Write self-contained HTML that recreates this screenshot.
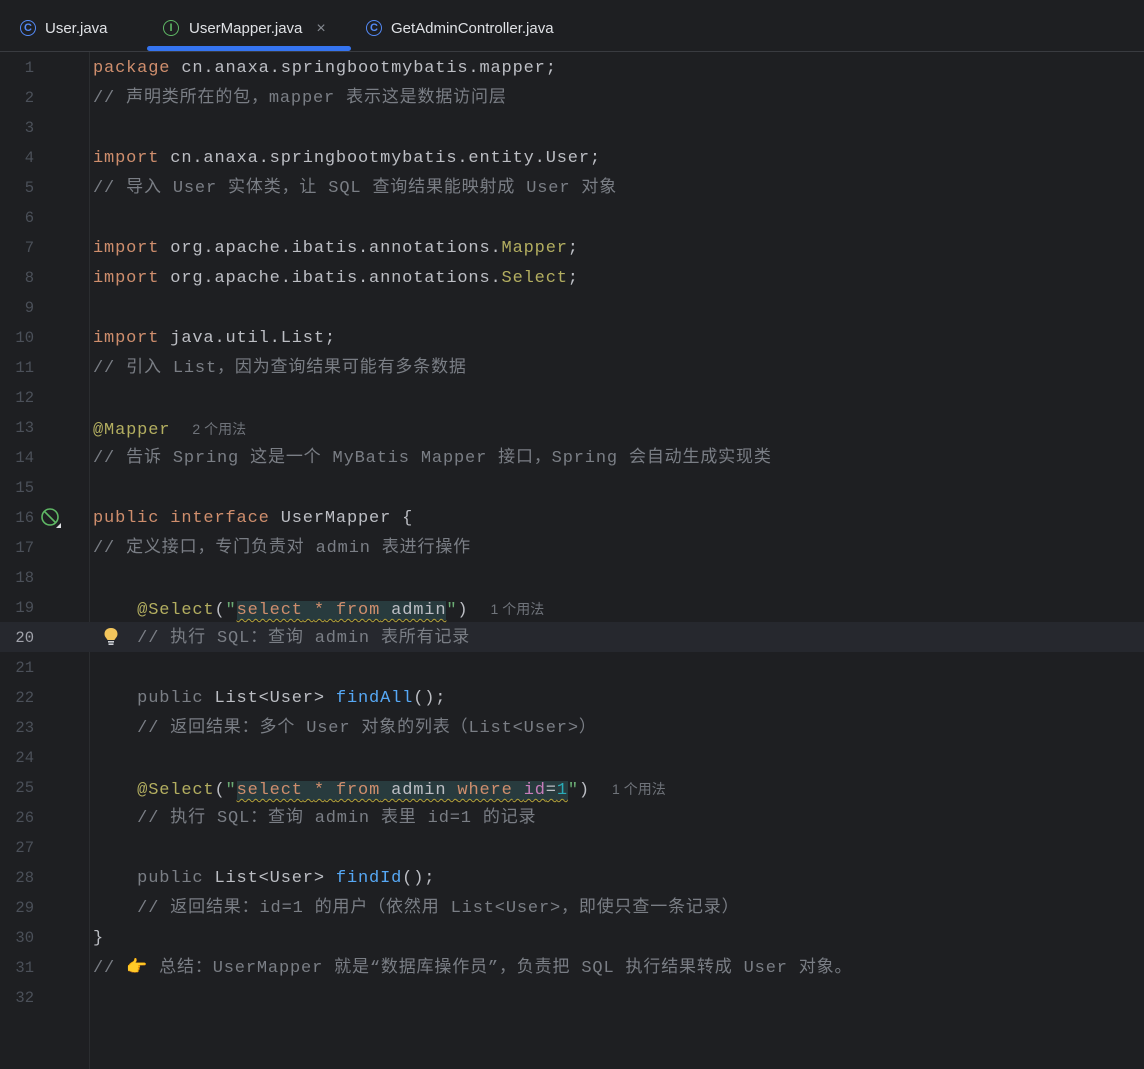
<!DOCTYPE html>
<html><head><meta charset="utf-8">
<style>
html,body{margin:0;padding:0;}
body{width:1144px;height:1069px;background:#1e1f22;position:relative;overflow:hidden;font-family:"Liberation Sans","Noto Sans CJK SC",sans-serif;}
.tabs{position:absolute;left:0;top:0;width:1144px;height:51px;background:#1e1f22;border-bottom:1px solid #393b40;}
.tab{position:absolute;top:17px;font-size:15px;color:#dfe1e5;height:24px;line-height:24px;}
.ic{position:absolute;top:3px;width:14px;height:14px;border:1.6px solid #548af7;border-radius:50%;font-size:11px;line-height:14px;text-align:center;color:#548af7;font-weight:bold;}
.ic.g{border-color:#5fb865;color:#5fb865;}
.uline{position:absolute;left:147px;top:46px;width:204px;height:5px;background:#3574f0;border-radius:3px;}
.gsep{position:absolute;left:89px;top:52px;width:1px;height:1017px;background:#2b2d30;}
.cur{position:absolute;left:0;top:622px;width:1144px;height:30px;background:#26282e;}
.ln{position:absolute;left:0;width:34px;text-align:right;font-family:"Liberation Mono",monospace;font-size:15.5px;color:#4b5059;height:30px;line-height:30px;transform:translateY(1px);}
.ln.c{color:#a1a3ab;}
.row{position:absolute;left:93px;height:30px;line-height:30px;white-space:pre;font-family:"Liberation Mono","Noto Sans CJK SC",monospace;font-size:17px;letter-spacing:0.84px;color:#bcbec4;transform:translateY(2px);}
.k{color:#cf8e6d}.cm{color:#7a7e85}.an{color:#b3ae60}.m{color:#56a8f5}.s{color:#6aab73}.pu{color:#c77dbb}.nm{color:#2aacb8}
.inj{background:#283b3e;text-decoration:underline wavy #b5a33a;text-decoration-thickness:1px;text-underline-offset:4px;}
.hint{font-family:"Liberation Sans","Noto Sans CJK SC",sans-serif;font-size:14px;color:#6f737a;letter-spacing:0;}
</style></head><body>
<div class="tabs">
 <div class="tab" style="left:20px"><span class="ic" style="left:0">C</span><span style="margin-left:25px">User.java</span></div>
 <div class="tab" style="left:163px"><span class="ic g" style="left:0">I</span><span style="margin-left:26px">UserMapper.java</span><span style="margin-left:14px;color:#868a91;font-size:16px">×</span></div>
 <div class="tab" style="left:366px"><span class="ic" style="left:0">C</span><span style="margin-left:25px">GetAdminController.java</span></div>
 <div class="uline"></div>
</div>
<div class="gsep"></div>
<div class="cur"></div>

<div class="ln" style="top:52px">1</div><div class="ln" style="top:82px">2</div><div class="ln" style="top:112px">3</div><div class="ln" style="top:142px">4</div><div class="ln" style="top:172px">5</div><div class="ln" style="top:202px">6</div><div class="ln" style="top:232px">7</div><div class="ln" style="top:262px">8</div><div class="ln" style="top:292px">9</div><div class="ln" style="top:322px">10</div><div class="ln" style="top:352px">11</div><div class="ln" style="top:382px">12</div><div class="ln" style="top:412px">13</div><div class="ln" style="top:442px">14</div><div class="ln" style="top:472px">15</div><div class="ln" style="top:502px">16</div><div class="ln" style="top:532px">17</div><div class="ln" style="top:562px">18</div><div class="ln" style="top:592px">19</div><div class="ln c" style="top:622px">20</div><div class="ln" style="top:652px">21</div><div class="ln" style="top:682px">22</div><div class="ln" style="top:712px">23</div><div class="ln" style="top:742px">24</div><div class="ln" style="top:772px">25</div><div class="ln" style="top:802px">26</div><div class="ln" style="top:832px">27</div><div class="ln" style="top:862px">28</div><div class="ln" style="top:892px">29</div><div class="ln" style="top:922px">30</div><div class="ln" style="top:952px">31</div><div class="ln" style="top:982px">32</div>

<svg style="position:absolute;left:40px;top:507px" width="24" height="22" viewBox="0 0 24 22">
 <circle cx="10" cy="10" r="8" fill="none" stroke="#5fb865" stroke-width="1.6"/>
 <line x1="4.5" y1="4.5" x2="15.5" y2="15.5" stroke="#5fb865" stroke-width="1.6"/>
 <path d="M21 16 L21 21 L16 21 Z" fill="#dfe1e5"/>
</svg>
<svg style="position:absolute;left:103px;top:627px" width="16" height="20" viewBox="0 0 16 20">
 <path d="M8 1 C3.5 1 1.5 4 1.5 7 C1.5 10 4 11.5 4.5 13 L11.5 13 C12 11.5 14.5 10 14.5 7 C14.5 4 12.5 1 8 1 Z" fill="#f2c55c"/>
 <rect x="5" y="14" width="6" height="1.6" fill="#ced0d6"/><rect x="5.5" y="16.4" width="5" height="1.6" fill="#ced0d6"/>
</svg>

<div class="row" style="top:52px"><span class="k">package</span> cn.anaxa.springbootmybatis.mapper;</div>
<div class="row cm" style="top:82px">// 声明类所在的包，mapper 表示这是数据访问层</div>
<div class="row" style="top:142px"><span class="k">import</span> cn.anaxa.springbootmybatis.entity.User;</div>
<div class="row cm" style="top:172px">// 导入 User 实体类，让 SQL 查询结果能映射成 User 对象</div>
<div class="row" style="top:232px"><span class="k">import</span> org.apache.ibatis.annotations.<span class="an">Mapper</span>;</div>
<div class="row" style="top:262px"><span class="k">import</span> org.apache.ibatis.annotations.<span class="an">Select</span>;</div>
<div class="row" style="top:322px"><span class="k">import</span> java.util.List;</div>
<div class="row cm" style="top:352px">// 引入 List，因为查询结果可能有多条数据</div>
<div class="row" style="top:412px"><span class="an">@Mapper</span>  <span class="hint">2 个用法</span></div>
<div class="row cm" style="top:442px">// 告诉 Spring 这是一个 MyBatis Mapper 接口，Spring 会自动生成实现类</div>
<div class="row" style="top:502px"><span class="k">public interface</span> UserMapper {</div>
<div class="row cm" style="top:532px">// 定义接口，专门负责对 admin 表进行操作</div>
<div class="row" style="top:592px">    <span class="an">@Select</span>(<span class="s">"</span><span class="inj"><span class="k">select</span> <span class="k">*</span> <span class="k">from</span> admin</span><span class="s">"</span>)  <span class="hint">1 个用法</span></div>
<div class="row cm" style="top:622px">    // 执行 SQL：查询 admin 表所有记录</div>
<div class="row" style="top:682px">    <span class="cm">public</span> List&lt;User&gt; <span class="m">findAll</span>();</div>
<div class="row cm" style="top:712px">    // 返回结果：多个 User 对象的列表（List&lt;User&gt;）</div>
<div class="row" style="top:772px">    <span class="an">@Select</span>(<span class="s">"</span><span class="inj"><span class="k">select</span> <span class="k">*</span> <span class="k">from</span> admin <span class="k">where</span> <span class="pu">id</span>=<span class="nm">1</span></span><span class="s">"</span>)  <span class="hint">1 个用法</span></div>
<div class="row cm" style="top:802px">    // 执行 SQL：查询 admin 表里 id=1 的记录</div>
<div class="row" style="top:862px">    <span class="cm">public</span> List&lt;User&gt; <span class="m">findId</span>();</div>
<div class="row cm" style="top:892px">    // 返回结果：id=1 的用户（依然用 List&lt;User&gt;，即使只查一条记录）</div>
<div class="row" style="top:922px">}</div>
<div class="row cm" style="top:952px">// <span style="color:#f2b33d">👉</span> 总结：UserMapper 就是“数据库操作员”，负责把 SQL 执行结果转成 User 对象。</div>
</body></html>
